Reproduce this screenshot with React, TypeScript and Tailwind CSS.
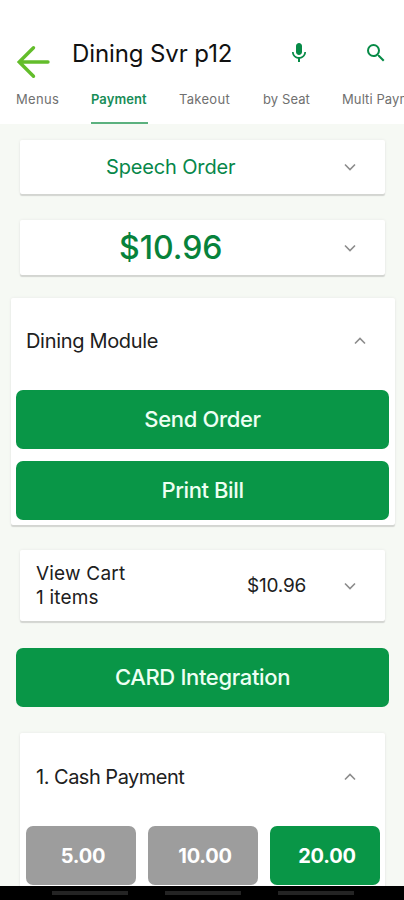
import type { ReactNode } from "react";

function Chevron({ up = false }: { up?: boolean }) {
  return (
    <svg width="12" height="8" viewBox="0 0 12 8" fill="none" stroke="#8c8c8c" strokeWidth="1.6" className="shrink-0">
      <path d={up ? "M1 6.500 6 1.500 11 6.500" : "M1 1.500 6 6.500 11 1.500"} />
    </svg>
  );
}

function Card({ className, children }: { className: string; children: ReactNode }) {
  return (
    <section className={`rounded-[2px] bg-white shadow-[0_2px_1px_#d3d5d1,0_0_3px_#e6e8e4] ${className}`}>{children}</section>
  );
}

function ActionButton({ children, className }: { children: ReactNode; className: string }) {
  return (
    <button className={`flex h-[59px] w-[373px] items-center justify-center rounded-[7px] bg-[#099647] text-[22px] font-medium text-[#edfff3] ${className}`}>
      {children}
    </button>
  );
}

export default function App() {
  return (
    <div className="flex h-[900px] w-[404px] flex-col overflow-hidden bg-[#f6f9f4] font-['Inter','Liberation_Sans',sans-serif] text-[#202020]">
      <header className="h-[124px] shrink-0 bg-white">
        <div className="flex h-[86px] items-start pt-9 pl-[16px]">
          <svg width="34" height="34" viewBox="0 0 34 34" fill="none" stroke="#63bd2b" strokeWidth="3.400" strokeLinecap="round" className="mt-[9px] shrink-0">
            <path d="M32 17H3.500M17.500 2.700 3.200 17l14.300 14.300" />
          </svg>
          <h1 className="ml-[22px] w-[202px] text-[24px] leading-[36px] tracking-[-0.1px] whitespace-nowrap text-[#111]">Dining Svr p12</h1>
          <svg width="24" height="24" viewBox="0 0 24 24" fill="#078b47" className="mt-[5px] ml-[13px] shrink-0">
            <path d="M12 14c1.660 0 3-1.340 3-3V5c0-1.660-1.340-3-3-3S9 3.340 9 5v6c0 1.660 1.340 3 3 3zm5.300-3c0 3-2.540 5.100-5.300 5.100S6.700 14 6.700 11H5c0 3.410 2.720 6.230 6 6.720V21h2v-3.280c3.280-.480 6-3.300 6-6.720h-1.700z" />
          </svg>
          <svg width="24" height="24" viewBox="0 0 24 24" fill="#078b47" className="mt-[5px] ml-[53px] shrink-0">
            <path d="M15.500 14h-.790l-.280-.270A6.471 6.471 0 0 0 16 9.500 6.500 6.500 0 1 0 9.500 16c1.610 0 3.090-.590 4.230-1.570l.270.280v.790l5 4.990L20.490 19l-4.990-5zm-6 0C7.010 14 5 11.990 5 9.500S7.010 5 9.500 5 14 7.010 14 9.500 11.990 14 9.500 14z" />
          </svg>
        </div>
        <nav className="flex h-[38px] items-start pl-4 text-[13px] leading-[26px] whitespace-nowrap text-[#707070]">
          <span className="w-[75px] shrink-0 tracking-[0.3px]">Menus</span>
          <span className="h-[38px] w-[57px] shrink-0 border-b-2 border-[#5bb17e] font-semibold tracking-[0.1px] text-[#188d57]">Payment</span>
          <span className="ml-[31px] w-[84px] shrink-0 tracking-[0.3px]">Takeout</span>
          <span className="w-[79px] shrink-0 tracking-[0.1px]">by Seat</span>
          <span className="shrink-0 tracking-[0.1px]">Multi Payment</span>
        </nav>
      </header>

      <main className="flex h-[762px] shrink-0 flex-col overflow-hidden pt-4">
        <Card className="mx-5 flex h-[54px] w-[365px] shrink-0 items-center justify-between pr-[29px] pl-[86px]">
          <span className="text-[20px] tracking-[-0.15px] text-[#07874a]">Speech Order</span>
          <Chevron />
        </Card>
        <Card className="mx-5 mt-[26px] flex h-[55px] w-[365px] shrink-0 items-center justify-between pr-[29px] pl-[99px]">
          <span className="text-[32px] font-medium text-[#07823b]">$10.96</span>
          <Chevron />
        </Card>
        <Card className="mt-[23px] ml-[11px] h-[227px] w-[384px] shrink-0 px-[5px]">
          <div className="flex h-[92px] items-center justify-between pr-[24px] pl-[10px]">
            <span className="mt-[-6px] text-[20px] tracking-[-0.32px]">Dining Module</span>
            <span className="mt-[-6px]"><Chevron up /></span>
          </div>
          <ActionButton className="tracking-[-0.35px]">Send Order</ActionButton>
          <ActionButton className="mt-3 tracking-[-0.4px]">Print Bill</ActionButton>
        </Card>
        <Card className="mx-5 mt-[25px] flex h-[71px] w-[365px] shrink-0 items-center pr-[29px] pl-4">
          <div className="w-[211px] text-[19px] leading-[24px]">
            <div className="tracking-[0.2px]">View Cart</div>
            <div className="tracking-[0.2px]">1 items</div>
          </div>
          <span className="mt-[2px] flex-1 text-[19px] tracking-[-0.2px]">$10.96</span>
          <Chevron />
        </Card>
        <ActionButton className="mt-[27px] ml-4 shrink-0 tracking-[-0.35px]">CARD Integration</ActionButton>
        <Card className="mx-5 mt-[26px] h-[170px] w-[365px] shrink-0 px-[6px]">
          <div className="flex h-[93px] items-center justify-between pr-[23px] pl-[10px]">
            <span className="mt-[-6px] text-[20px] tracking-[-0.5px]">1. Cash Payment</span>
            <span className="mt-[-6px]"><Chevron up /></span>
          </div>
          <div className="flex gap-3 text-[20px] font-bold tracking-[-0.2px] text-white">
            <button className="h-[59px] w-[110px] shrink-0 rounded-[7px] bg-[#9d9d9d] pl-1">5.00</button>
            <button className="h-[59px] w-[110px] shrink-0 rounded-[7px] bg-[#9d9d9d] pl-1">10.00</button>
            <button className="h-[59px] w-[110px] shrink-0 rounded-[7px] bg-[#099647] pl-1">20.00</button>
          </div>
        </Card>
      </main>

      <footer className="flex h-[14px] shrink-0 gap-[37px] bg-black pt-[5px] pl-[51.500px]">
        <span className="h-1 w-[76px] bg-[#242424]" />
        <span className="h-1 w-[76px] bg-[#242424]" />
        <span className="h-1 w-[76px] bg-[#242424]" />
      </footer>
    </div>
  );
}
